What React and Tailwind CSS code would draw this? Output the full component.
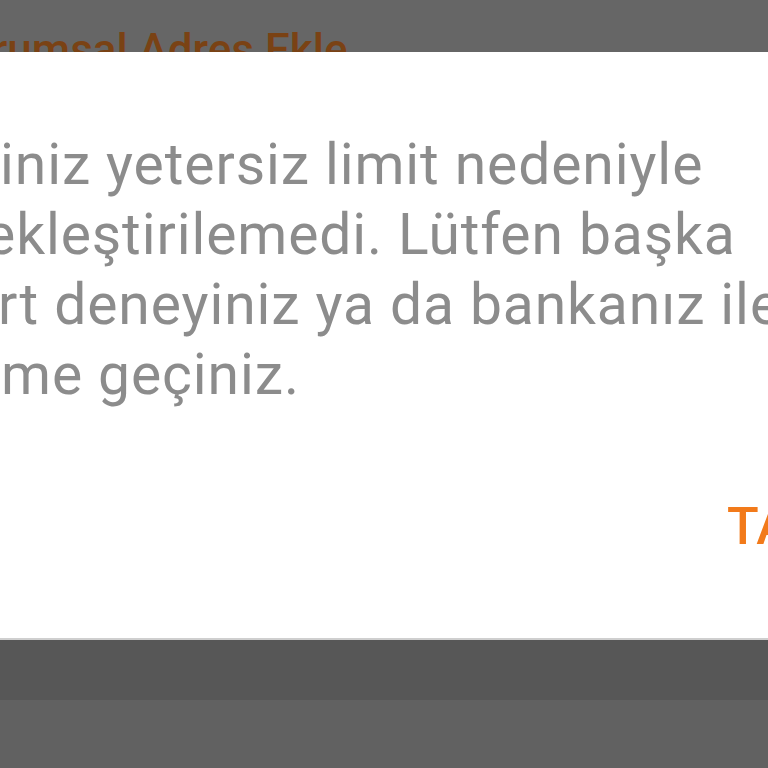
export default function App() {
  const font = { fontFamily: 'Roboto, "Noto Sans", sans-serif' };
  return (
    <div className="w-[768px] h-[768px] overflow-hidden flex flex-col bg-[#616161]" style={font}>
      <div className="h-[52px] shrink-0 bg-[#666666] overflow-hidden">
        <div className="pt-[28px] ml-[-60px] whitespace-nowrap text-[44px] leading-none font-medium text-[#7a4214]">
          Kurumsal Adres Ekle
        </div>
      </div>
      <div className="h-[588px] shrink-0 bg-white overflow-hidden pt-[78px] border-b-2 border-[#cfcfcf]">
        <div className="text-[57px] leading-[70px] text-[#8c8c8c] whitespace-nowrap tracking-[0.9px]">
          <div className="ml-0">iniz yetersiz limit nedeniyle</div>
          <div className="ml-[-15px]">ekleştirilemedi. Lütfen başka</div>
          <div className="ml-[-2px]">rt deneyiniz ya da bankanız ile</div>
          <div className="ml-[1px]">me geçiniz.</div>
        </div>
        <div className="mt-[91px] pl-[727px] whitespace-nowrap text-[52px] leading-none font-medium text-[#f27a1a]">
          TAMAM
        </div>
      </div>
      <div className="h-[60px] shrink-0 bg-[#575757]" />
      <div className="flex-1 bg-[#616161]" />
    </div>
  );
}
